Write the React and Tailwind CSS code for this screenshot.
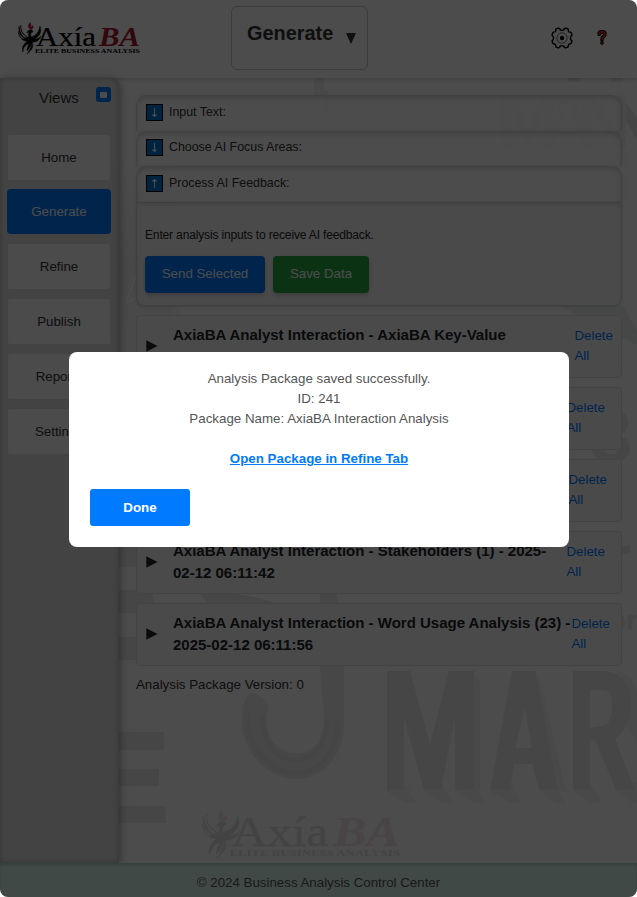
const SANS = 'font-["Liberation_Sans",Arial,sans-serif]';

function Phoenix({ flame }) {
  return (
    <g>
      <path d="M1 4C0 11 3 16 9 17c-5-2-7-6-8-13zM0 9c1 6 4 9 9 10-5 0-8-4-9-10zM3 3c-1 5 2 10 8 13 2 2 2 4 0 7-1-4-5-5-7-6 3 0 5-1 4-3C4 12 2 8 3 3zM22 4c2 7-1 11-6 13 4 0 6-1 7-3-2 5-5 6-8 6-3 2-2 5-6 9 0-4 1-6 4-8-5 1-8 4-8 9-2-6 2-9 6-12 0-3-1-5 0-8l-2 1c1-3 3-4 5-3l1 2c-2 0-3 2-2 5 5-1 8-5 9-11zM14 21c2 3 0 7-5 11 3-4 4-7 5-11z" stroke="#000" strokeWidth="0.500" />
      <path d="M12 7c-3-2-2-5 1-7-1 2 1 3 0 5 2-1 2-2 1-3 3 3 1 6-2 5z" fill={flame} />
    </g>
  );
}

function Logo({ className }) {
  return (
    <svg viewBox="0 0 124 34" preserveAspectRatio="none" className={className} fill="#000">
      <Phoenix flame="#c8102e" />
      <g fontFamily="Liberation Serif, serif">
        <text x="18" y="24" fontSize="28" stroke="#000" strokeWidth="0.200" textLength="60" lengthAdjust="spacingAndGlyphs">Axía</text>
        <text x="81" y="24" fontSize="28" fontWeight="bold" fontStyle="italic" fill="#a8182c" textLength="41" lengthAdjust="spacingAndGlyphs">BA</text>
        <text x="17" y="30.800" fontSize="5.500" fontWeight="bold" textLength="105" lengthAdjust="spacingAndGlyphs">ELITE BUSINESS ANALYSIS</text>
      </g>
    </svg>
  );
}

function Backdrop() {
  return (
    <svg className="absolute inset-0 h-full w-full" viewBox="0 0 637 897" fill="#e9ebea">
      <defs>
        <linearGradient id="fade" x1="0" x2="0" y1="0" y2="1">
          <stop offset="0" stopColor="#fdfdfd" />
          <stop offset="0.500" stopColor="#ecf0ee" />
          <stop offset="1" stopColor="#f8f9f8" />
        </linearGradient>
      </defs>
      <rect x="119" y="160" width="60" height="220" fill="url(#fade)" />
      <path d="M126 303L138 270M126 303L150 292M160 345L178 304" stroke="#fff" strokeWidth="1.500" fill="none" />
      <path d="M200 306H560L637 345V330L622 305z" fill="#ebefed" />
      <path d="M314 96V80q5-5 10 0v8l4 4v20h-6V96z" fill="#f0f0f0" />
      <path d="M568 78h12v4h-12zM611 78h12v4h-12z" />
      <path d="M620 94l17 24v22l-15-26z" fill="#e4e6e5" />
      <g fontFamily="Liberation Sans, sans-serif" fontWeight="bold">
        <text x="497" y="147" fontSize="74" fill="#f4f4f4" textLength="134">MAN</text>
        <text x="590" y="462" fontSize="76">3</text>
        <text x="606" y="580" fontSize="64">r</text>
        <text x="609" y="630" fontSize="28">or</text>
      </g>
      <path d="M119 543h29v24h-29zM119 590h34v23h-34zM119 637h32v23h-32zM200 594q30-5 80 10h-72zM320 594h17v9h-17z" />
      <path d="M119 732h45v18h-45zM119 769h40v17h-40zM119 806h46l1 17h-47z" />
      <path d="M320 666h24v56c0 42-30 60-52 57-30-4-51-30-50-61 1-25 10-27 14-24 9 5 12 9 13 12-8 24 4 45 24 47 19 2 32-12 31-35z" fill="#edefee" />
      <path d="M247 712c0 32 18 58 46 61 26 2 45-22 45-54M262 716c0 26 12 43 32 44 18 0 32-12 33-40" fill="none" stroke="#e4e7e5" strokeWidth="5" />
      <g fill="#f3f4f3">
        <path d="M387 791l18 12h11l-10-18zM423 791l19 12h10l-9-18zM456 791l19 12h10l-9-18zM490 791l20 12h10l-7-20zM537 788l18 15h11l-10-18zM573 791l18 12h11l-10-18zM614 789l19 14h4v-20z" />
        <path d="M472 671l8 12v107h-8zM534 671l6 10 26 110-9-1zM617 671q18 3 20 24v46l-10-12z" />
      </g>
      <path d="M387 671h23l20 73 19-73h25v119h-19v-73l-14 73h-17l-20-72v72h-17zM512 671h23l23 119h-19l-7-26h-18l-4 26h-20zM515 748h17l-7-40zM573 671h32q25 2 26 31 0 25-16 37l20 51h-19l-21-50h-5v50h-17zM590 690v38l16-3q6-4 6-20 0-15-9-15z" fillRule="evenodd" />
    </svg>
  );
}

function Section({ title, arrow }) {
  return (
    <div className="flex h-[35.5px] items-center rounded-t-[10px] border border-b-0 border-[#d9d9d9] bg-white/70 pb-[2px] pl-[9px] shadow-[inset_0_2px_5px_rgba(0,0,0,0.16),0_1px_4px_rgba(0,0,0,0.08)]">
      <span className="mr-[6px] flex h-[17px] w-[17px] items-center justify-center border border-black bg-[#0078d7] text-white">
        <svg viewBox="0 0 9 11" className={arrow === "up" ? "h-[11px] w-[9px] rotate-180" : "h-[11px] w-[9px]"} fill="none" stroke="currentColor" strokeWidth="1.100">
          <path d="M4.500 1v8.500M2.500 7.500l2 2 2-2" />
        </svg>
      </span>
      <span className="text-[12.4px] text-[#333]">{title}</span>
    </div>
  );
}

const packages = [
  { lines: ["AxiaBA Analyst Interaction - AxiaBA Key-Value"], pad: "pl-[437.5px]", top: "pt-[10px]" },
  { lines: [], pad: "pl-[429.5px]", top: "pt-[10px]" },
  { lines: [], pad: "pl-[431.5px]", top: "pt-[10px]" },
  { lines: ["AxiaBA Analyst Interaction - Stakeholders (1) - 2025-", "02-12 06:11:42"], pad: "pl-[429.5px]", top: "pt-[10px]" },
  { lines: ["AxiaBA Analyst Interaction - Word Usage Analysis (23) -", "2025-02-12 06:11:56"], pad: "pl-[434.5px]", top: "pt-[10px]" },
];

function PackageCard({ item }) {
  return (
    <div className="grid h-[63px] rounded-[4px] border border-[#e2e2e2] bg-[#f8f8f8]/95">
      <div className="col-start-1 row-start-1 flex pt-[8px] pl-[9px]">
        <svg viewBox="0 0 12 12" className="mt-[16px] mr-[15px] h-[12px] w-[12px]" fill="#212529">
          <path d="M0.300 0.300L11.500 6L0.300 11.700z" />
        </svg>
        <div className="text-[15px] leading-[22px] font-bold whitespace-nowrap text-[#212529]">
          {item.lines.map((line) => (
            <div key={line}>{line}</div>
          ))}
        </div>
      </div>
      <div className={`col-start-1 row-start-1 text-[13.3px] leading-[20px] text-[#007bff] ${item.pad} ${item.top}`}>
        Delete<br />All
      </div>
    </div>
  );
}

const views = ["Home", "Generate", "Refine", "Publish", "Reports", "Settings"];

export default function App() {
  return (
    <div className={`relative h-[897px] w-[637px] overflow-hidden bg-white ${SANS}`}>
      <div className="relative flex h-full flex-col overflow-hidden rounded-[8px] bg-[#fdfdfd]">
        <Backdrop />
        <header className="relative flex h-[78px] shrink-0 items-start bg-[#fdfdfd] shadow-[0_1px_4px_rgba(0,0,0,0.2)]">
          <Logo className="mt-[22px] ml-[18px] h-[34px] w-[124px]" />
          <div className="mt-[6px] ml-[89px] flex h-[64px] w-[137px] rounded-[6px] border border-[#c8c8c8] pt-[11px] pl-[15px] text-[#333]">
            <span className="w-[86px] text-[19.9px] leading-[30px] font-bold">Generate</span>
            <svg viewBox="0 0 10 11" className="mt-[15px] ml-[13px] h-[11px] w-[10px]" fill="#333"><path d="M0 0h10L5 11z" /></svg>
          </div>
          <svg viewBox="0 0 22 22" className="mt-[27px] ml-[183px] h-[22px] w-[22px]" fill="none" stroke="#000" strokeWidth="1.400" strokeLinejoin="round">
            <path d="M7 1.200Q9 1 9.200 2.800Q11 4 12.800 2.800Q13 1 15 1.200L17.200 2.200Q17.200 4.400 17.800 4.900Q19.200 4.700 20.400 6L20.900 8.300Q19.400 9.200 19.400 11Q19.400 12.800 20.900 13.700L20.400 16Q19.200 17.300 17.800 17.100Q17.200 17.600 17.200 19.800L15 20.800Q13 21 12.800 19.200Q11 18 9.200 19.200Q9 21 7 20.800L4.800 19.800Q4.800 17.600 4.200 17.100Q2.800 17.300 1.600 16L1.100 13.700Q2.600 12.800 2.600 11Q2.600 9.200 1.100 8.300L1.600 6Q2.800 4.700 4.200 4.900Q4.800 4.400 4.800 2.200Z" />
            <circle cx="11" cy="11" r="5.200" stroke="#777" strokeWidth="1" />
            <circle cx="11" cy="11" r="2.200" fill="#000" stroke="none" />
          </svg>
          <svg viewBox="0 0 10 16" className="mt-[30px] ml-[24px] h-[15px] w-[10px]" fill="none" strokeLinecap="round">
            <path d="M2 4.500C2 1 8 1 8 4.500C8 7 5 7 5 10M5 13.600v.1" stroke="#000" strokeWidth="4" />
            <path d="M2 4.500C2 1 8 1 8 4.500C8 7 5 7 5 10M5 13.600v.1" stroke="#c42b1c" strokeWidth="2.200" />
          </svg>
        </header>
        <div className="relative flex h-[785px] shrink-0">
          <aside className="w-[119px] shrink-0 rounded-tr-[10px] bg-[#dfdfdf] pr-[8px] pl-[7px] shadow-[2px_0_7px_rgba(0,0,0,0.3),inset_0_0_5px_rgba(0,0,0,0.25)]">
            <div className="flex h-[57px] pl-[32px] text-[15px] text-[#333]">
              <span className="w-[57px] pt-[9px]">Views</span>
              <span className="mt-[9px] flex h-[15px] w-[15px] items-center justify-center rounded-[3px] bg-[#007bff]">
                <span className="h-[6px] w-[7px] rounded-[1px] bg-white" />
              </span>
            </div>
            <nav className="flex flex-col gap-[10.1px]">
              {views.map((view) => (
                <div
                  key={view}
                  className={
                    view === "Generate"
                      ? "-mt-px flex h-[45px] items-center justify-center rounded-[4px] bg-[#007bff] text-[13.3px] text-white"
                      : "mx-px flex h-[45px] items-center justify-center rounded-[2px] bg-[#fafafa] text-[13.3px] text-[#333]"
                  }
                >
                  {view}
                </div>
              ))}
            </nav>
          </aside>
          <main className="w-[503px] pt-[17px] pl-[17px]">
            <Section title="Input Text:" arrow="down" />
            <Section title="Choose AI Focus Areas:" arrow="down" />
            <Section title="Process AI Feedback:" arrow="up" />
            <div className="h-[104px] rounded-b-[8px] border border-[#d4d4d4] bg-[#f8f8f8]/95 pt-[23px] pl-[8px] shadow-[inset_0_2px_5px_rgba(0,0,0,0.1),0_1px_3px_rgba(0,0,0,0.12)]">
              <p className="text-[12px] leading-[18px] tracking-[-0.15px] text-[#212529]">Enter analysis inputs to receive AI feedback.</p>
              <div className="mt-[12px] flex gap-[8px] text-[13.3px] text-white">
                <span className="flex h-[37px] w-[120px] items-center justify-center rounded-[4px] bg-[#007bff] shadow-[0_2px_4px_rgba(0,0,0,0.2)]">Send Selected</span>
                <span className="flex h-[37px] w-[96px] items-center justify-center rounded-[4px] bg-[#28a745] shadow-[0_2px_4px_rgba(0,0,0,0.2)]">Save Data</span>
              </div>
            </div>
            <div className="mt-[9.5px] flex flex-col gap-[9px]">
              {packages.map((item, i) => (
                <PackageCard key={i} item={item} />
              ))}
            </div>
            <p className="mt-[9px] text-[13.3px] leading-[20px] text-[#333]">Analysis Package Version: 0</p>
            <Logo className="mt-[115px] ml-[66px] h-[51px] w-[201px] opacity-10" />
          </main>
        </div>
        <footer className="relative flex h-[34px] shrink-0 items-center justify-center bg-[#d8f6e9] pt-[6px] text-[13.3px] text-[#555] shadow-[inset_0_2px_3px_rgba(0,0,0,0.15)]">
          © 2024 Business Analysis Control Center
        </footer>
        <div className="absolute inset-0 bg-black/70" />
        <section className="absolute top-[352px] left-[69px] h-[195px] w-[500px] rounded-[8px] bg-white px-[21px] pt-[17px] text-center text-[13.33px] leading-[20px] text-[#555]">
          <p>Analysis Package saved successfully.</p>
          <p>ID: 241</p>
          <p>Package Name: AxiaBA Interaction Analysis</p>
          <a className="mt-[20px] block font-bold text-[#007bff] underline">Open Package in Refine Tab</a>
          <button className="mt-[20px] block h-[37px] w-[100px] rounded-[3px] bg-[#007bff] font-bold text-white">Done</button>
        </section>
      </div>
    </div>
  );
}
